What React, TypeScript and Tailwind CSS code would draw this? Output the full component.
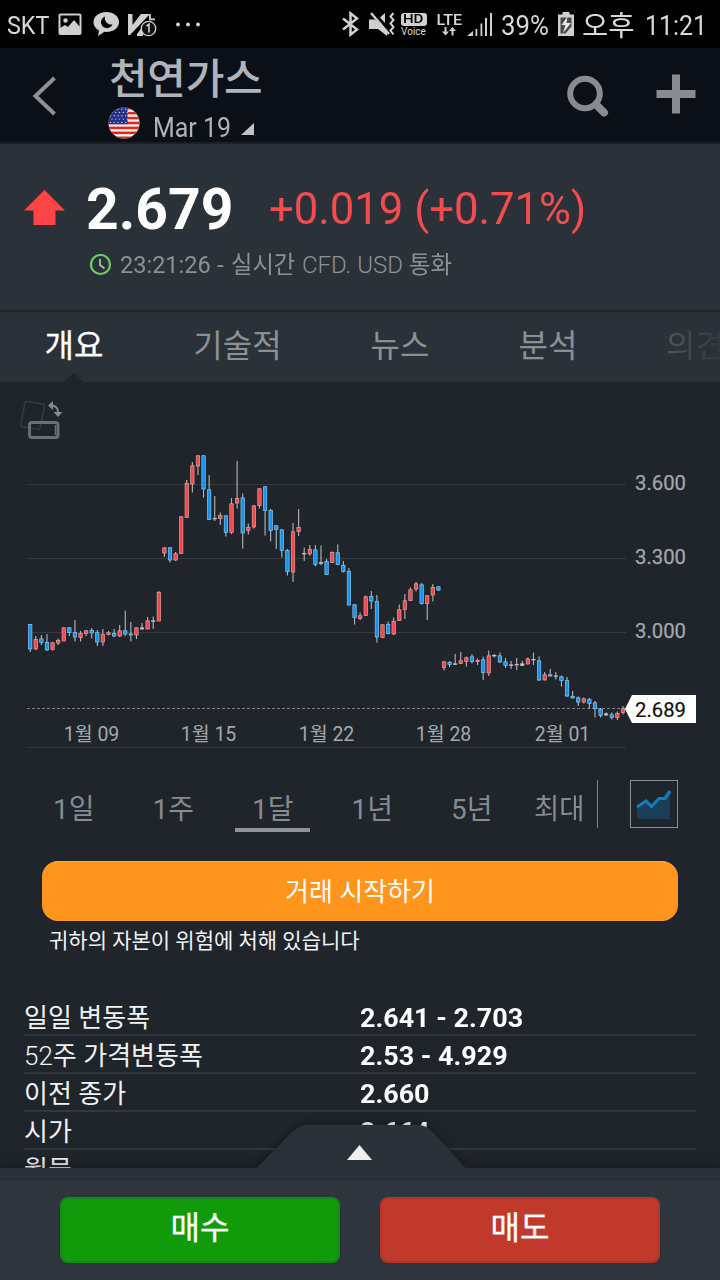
import React from "react";

type Kind = "r" | "b" | "w";
type Candle = [Kind, number, number, number, number];

// kind, high, body top, body bottom, low (vertical chart coordinates)
const candles: Candle[] = [
  ["b", 624, 624, 649, 652], ["r", 636, 639, 649, 650], ["b", 635, 638.5, 642.5, 645], ["b", 634, 642, 650, 651],
  ["r", 642, 642.5, 649.5, 650.5], ["r", 638.5, 640, 643, 645], ["r", 627, 627.5, 641, 641], ["b", 627, 627.5, 632.5, 636],
  ["b", 620, 632, 637, 641.5], ["r", 631, 633, 637.5, 641.5], ["r", 630, 630.5, 633.5, 636], ["b", 628, 630, 633, 638.5],
  ["b", 630, 632.5, 642, 646], ["r", 629, 634, 642, 646], ["r", 631, 632.5, 634.5, 635.5], ["b", 629, 633, 636, 637],
  ["r", 625, 630.5, 636, 637], ["b", 610.5, 630.5, 634, 636], ["b", 622, 633.5, 635, 641.5], ["r", 627, 627.5, 635, 639],
  ["w", 623, 627.5, 629, 630], ["r", 617, 620.5, 629, 629], ["w", 616.5, 620.5, 621.5, 629], ["r", 591, 592, 621, 621],
  ["r", 547, 547.5, 553, 557], ["b", 547, 547.5, 560, 562.5], ["r", 552, 553.5, 560, 561], ["r", 516, 516.5, 553.5, 553.5],
  ["r", 480, 483, 517.5, 518], ["r", 462, 465.5, 484, 492.5], ["r", 455, 455.5, 466, 475], ["b", 455, 455.5, 489, 497.5],
  ["b", 475, 489.5, 519.5, 520], ["w", 496, 518, 519, 521], ["r", 512.5, 515, 518.5, 525], ["b", 515, 515.5, 532.5, 536.5],
  ["r", 498, 503.5, 532.5, 534], ["r", 461, 498, 503, 508.5], ["b", 493.5, 497.5, 533, 548.5], ["r", 523.5, 527, 530.5, 534.5],
  ["r", 505, 505.5, 527, 528.5], ["r", 488, 488.5, 505.5, 508.5], ["b", 486, 486.5, 510.5, 535.5], ["b", 509, 510, 530.5, 541.5],
  ["b", 525, 525.5, 529.5, 549], ["b", 529, 529.5, 550.5, 557.5], ["b", 549, 550, 571.5, 575.5], ["r", 523, 531.5, 572, 582],
  ["r", 509, 527, 531.5, 536], ["w", 547.5, 553, 554, 561], ["r", 545, 549, 554, 555.5], ["b", 545, 549.5, 564.5, 566.5],
  ["w", 545.5, 562, 563.5, 565], ["b", 559, 561, 574.5, 575], ["r", 551.5, 552, 562.5, 563], ["b", 544.5, 552.5, 564.5, 565],
  ["b", 561, 565, 571.5, 572.5], ["b", 568, 571, 605, 605.5], ["b", 604, 604.5, 617.5, 624.5], ["r", 612.5, 615.5, 618.5, 620],
  ["r", 595.5, 596.5, 615.5, 616], ["b", 591, 596, 601, 609], ["b", 595, 601, 637, 642.5], ["r", 624, 624.5, 637.5, 638],
  ["b", 621.5, 624, 633.5, 634.5], ["r", 617.5, 621, 634, 635], ["r", 604.5, 609.5, 620.5, 621], ["r", 594, 600.5, 609.5, 619],
  ["r", 587.5, 589.5, 600.5, 601], ["r", 582, 583.5, 589, 591.5], ["b", 583, 584.5, 603.5, 604.5], ["r", 595, 595.5, 603.5, 620],
  ["r", 584, 587, 595, 601.5], ["b", 586, 586.5, 590, 591], ["r", 661, 661.5, 667.5, 670.5], ["b", 661, 662, 664.5, 667],
  ["w", 654, 663.5, 664.5, 665], ["r", 652, 660.5, 663.5, 664], ["r", 656.5, 657.5, 661.5, 666.5], ["b", 654, 656.5, 661.5, 663.5],
  ["r", 658.5, 660, 661.5, 665], ["b", 656.5, 659.5, 672.5, 680], ["r", 650.5, 655.5, 673, 676], ["w", 654, 655, 656, 657.5],
  ["b", 652.5, 655.5, 662, 663], ["b", 658, 661.5, 665.5, 668], ["w", 661, 664.5, 665.5, 669], ["w", 658, 664, 665, 670],
  ["w", 661, 663.5, 665.5, 666], ["r", 657.5, 658.5, 664, 664.5], ["w", 652.5, 659, 660, 665], ["b", 656.5, 660.5, 680, 681],
  ["r", 672, 674.5, 680, 680.5], ["b", 669, 674.5, 676, 676.5], ["w", 672, 675.5, 676.5, 679.5], ["b", 675.5, 676.5, 680.5, 686.5],
  ["b", 677, 680, 696, 697], ["b", 691, 696, 698, 698.5], ["b", 696.5, 697.5, 702, 706], ["r", 697.5, 698.5, 702, 703.5],
  ["b", 698, 699, 703.5, 709], ["b", 701, 702.5, 708.5, 717.5], ["b", 708, 709, 715.5, 717.5], ["w", 712.5, 713.5, 715, 716],
  ["b", 712.5, 714.5, 717.5, 719.5], ["r", 711.5, 713, 717.5, 720], ["r", 706, 708.5, 712.5, 714.5],
];

const fills: Record<Kind, string> = { r: "#f0474b", b: "#1493ee", w: "#c9cdd0" };
const strokes: Record<Kind, string> = { r: "#e8a0a1", b: "#8cc6ef", w: "#b9bdc0" };

function StatusBar() {
  return (
    <header className="flex h-12 shrink-0 items-center bg-black text-[28px] text-[#d8d8d8]">
      <span className="mt-[2px] ml-[7px] w-[51px] origin-left scale-x-[.88] text-[26.500px] whitespace-nowrap">SKT</span>
      <svg width="24" height="24" viewBox="0 0 24 24" fill="none">
        <rect x="1.500" y="2.500" width="21" height="19.500" rx="1" stroke="#d0d0d0" strokeWidth="2" />
        <circle cx="7.500" cy="8.500" r="2.200" fill="#d0d0d0" />
        <path d="M2 20v-4l5-3 3 2 6-7 6 7v6H2z" fill="#d0d0d0" />
      </svg>
      <svg className="ml-[11px]" width="27" height="26" viewBox="0 0 27 26">
        <path d="M13.5 1C6.300 1 .5 5.400.5 11c0 4 2.500 6.800 5.500 8.400L5 25l6.500-4.200c9 .8 14.500-4 14.500-9.800C26 5.400 20.500 1 13.500 1z" fill="#d0d0d0" />
        <path d="M12 5.500a6 6 0 1 0 7.500 8A6.500 6.500 0 0 1 12 5.500z" fill="#000" />
      </svg>
      <svg className="ml-[8px]" width="30" height="26" viewBox="0 0 30 26">
        <path d="M0 3h4.500v11L13 3h9L2 24H0z" fill="#d0d0d0" />
        <path d="M9 23l6-8v10H9zM21 3h1.800v4.500H27v1.800h-6z" fill="#d0d0d0" />
        <circle cx="20.500" cy="17.500" r="7.200" fill="#111" stroke="#d0d0d0" strokeWidth="1.300" />
        <path d="M18.500 15l2.500-1.700v8.200" fill="none" stroke="#d0d0d0" strokeWidth="1.600" />
      </svg>
      <svg className="ml-[17px]" width="28" height="6" viewBox="0 0 28 6" fill="#d8d8d8">
        <circle cx="3" cy="3.500" r="1.900" /><circle cx="13" cy="3.500" r="1.900" /><circle cx="23" cy="3.500" r="1.900" />
      </svg>
      <svg className="ml-[139px]" width="17" height="26" viewBox="0 0 17 26" fill="none" stroke="#d0d0d0" strokeWidth="2.500">
        <path d="M1 7.500l14 11-6.500 5.200V2.300L15 7.500l-14 11" />
      </svg>
      <svg className="ml-[10px]" width="27" height="26" viewBox="0 0 27 26" fill="none">
        <path d="M0 8.500h6l12 12v4.500l-9-7H0zM11 6.500L16 2v10z" fill="#d0d0d0" />
        <path d="M2 2l18 21" stroke="#d0d0d0" strokeWidth="2.400" />
        <path d="M24.500 2l-3 3.500 3 3.500-3 3.500 3 3.500-3 3.500 3 4" stroke="#d0d0d0" strokeWidth="2" />
      </svg>
      <div className="ml-[4px] flex w-[27px] flex-col items-center pt-px">
        <span className="flex h-[13px] w-[26px] items-center justify-center rounded-[3px] bg-[#d0d0d0] text-[12px] leading-none font-medium text-black"><span className="scale-x-[1.25]">HD</span></span>
        <span className="text-[10px] leading-[11px]">Voice</span>
      </div>
      <div className="ml-[8px] flex w-[28px] flex-col items-center">
        <span className="scale-x-[1.04] text-[15.500px] leading-[14px] font-medium">LTE</span>
        <svg width="14" height="9" viewBox="0 0 14 9" fill="#d0d0d0">
          <path d="M2.500 0h2v4.500H7L3.500 8.500 0 4.500h2.500zM9.500 8.500h2V4H14L10.500 0 7 4h2.500z" />
        </svg>
      </div>
      <svg className="ml-[4px]" width="26" height="26" viewBox="0 0 26 26" fill="#d0d0d0">
        <path d="M0 25l6-5v5zM8.500 18h1.800v7H8.500zM13.500 12.500h1.800V25h-1.800zM18 7h2v18h-2zM23 2h2v23h-2z" />
      </svg>
      <span className="mt-[4px] ml-[8px] w-[56px] origin-left scale-x-[.92] whitespace-nowrap">39%</span>
      <svg width="18" height="26" viewBox="0 0 18 26">
        <path d="M5.500 1h7v2.500H17V25H1V3.500h4.500z" fill="#d0d0d0" />
        <path d="M3.500 6.500h11v9l-6 7H3.500z" fill="#4a4a4a" />
        <path d="M10.500 5.500L4.500 14h4L6 22l8-10H9.500z" fill="#e8e8e8" />
      </svg>
      <span className="mt-[5px] ml-[7px] w-[63px] origin-left scale-x-[1.02] whitespace-nowrap">오후</span>
      <span className="mt-[4px] origin-left scale-x-[.89] whitespace-nowrap">11:21</span>
    </header>
  );
}

function Flag() {
  const stripes = [0, 1, 2, 3, 4, 5, 6];
  const stars = [0, 1, 2, 3, 4];
  return (
    <svg width="32" height="32" viewBox="0 0 32 32">
      <defs>
        <clipPath id="disc"><circle cx="16" cy="16" r="15.500" /></clipPath>
      </defs>
      <g clipPath="url(#disc)">
        <rect width="32" height="32" fill="#f3e9e6" />
        {stripes.map((i) => <rect key={i} y={i * 4.92} width="32" height="2.460" fill="#d92a20" />)}
        <rect width="19.500" height="17.200" fill="#25318b" />
        {stars.map((r) => stars.map((c) => <circle key={r + "-" + c} cx={2.5 + c * 3.8 + (r % 2) * 1.5} cy={2.2 + r * 3.3} r=".7" fill="#c5cbe8" />))}
      </g>
    </svg>
  );
}

function TitleBar() {
  return (
    <div className="flex h-24 shrink-0 border-b-2 border-[#1b2028] bg-[#0b0f17] text-[#b0b4ba]">
      <svg className="mt-[27px] ml-[31px]" width="28" height="42" viewBox="0 0 28 42" fill="none">
        <path d="M23.500 3L4.500 21l19 18" stroke="#8d9198" strokeWidth="4" />
      </svg>
      <div className="ml-[48px] flex w-[459px] flex-col">
        <h1 className="mt-[10px] ml-[2px] h-[46px] text-[42px] leading-[44px] font-medium tracking-[-0.300px]">천연가스</h1>
        <div className="flex h-[36px] items-center">
          <div className="mt-[2px] ml-px"><Flag /></div>
          <span className="mt-[12px] ml-[13px] w-[87px] origin-left scale-x-[.89] text-[28px] whitespace-nowrap">Mar 19</span>
          <svg className="mt-[14px] ml-px" width="14" height="14" viewBox="0 0 14 14"><path d="M13 1v12H0z" fill="#c0c3c6" /></svg>
        </div>
      </div>
      <svg className="mt-[27px]" width="48" height="46" viewBox="0 0 48 46" fill="none" stroke="#888c92">
        <circle cx="19" cy="18.500" r="14.800" strokeWidth="6" />
        <path d="M30 29.500l8 8" strokeWidth="8" strokeLinecap="round" />
      </svg>
      <svg className="mt-[26px] ml-[42px]" width="40" height="40" viewBox="0 0 40 40" fill="none" stroke="#888c92" strokeWidth="8">
        <path d="M20 .5v39M.5 20h39" />
      </svg>
    </div>
  );
}

function Quote() {
  return (
    <section className="flex h-[166px] shrink-0 flex-col bg-[#2b3138]">
      <div className="mt-[33px] flex h-[64px] items-center">
        <svg className="ml-[24px]" width="42" height="38" viewBox="0 0 42 38"><path d="M20.500 0L41 20.500H31.500V35h-22V20.500H0z" fill="#fb4547" /></svg>
        <span className="mt-px ml-[20px] w-[183px] text-[57px] leading-none font-bold whitespace-nowrap text-white">2.679</span>
        <span className="origin-left scale-x-[.992] text-[44px] leading-none whitespace-nowrap text-[#f34c4f]">+0.019 (+0.71%)</span>
      </div>
      <div className="mt-[6px] flex h-[36px] items-center text-[24px] whitespace-nowrap text-[#8c9196]">
        <svg className="ml-[89px]" width="23" height="23" viewBox="0 0 23 23" fill="none">
          <circle cx="11.500" cy="10.500" r="9.500" stroke="#6ecb63" strokeWidth="2.200" />
          <path d="M11 5V11l4.500 3.500" stroke="#a4c9a0" strokeWidth="1.800" />
        </svg>
        <span className="ml-[8px] w-[97px] origin-left scale-x-[.98]">23:21:26</span>
        <span className="w-[14px]">-</span>
        <span className="w-[71px] origin-left scale-x-[.97]">실시간</span>
        <span className="w-[107px] font-light">CFD. USD</span>
        <span className="origin-left scale-x-[.97]">통화</span>
      </div>
    </section>
  );
}

function Tabs() {
  return (
    <nav className="relative flex h-[72px] shrink-0 overflow-hidden border-t-2 border-[#21262c] bg-[#2b3138] text-[32px] leading-[69px] whitespace-nowrap text-[#8b9095]">
      <span className="w-[148px] shrink-0 text-center text-white [-webkit-text-stroke:0.300px_white]">개요</span>
      <span className="w-[179px] shrink-0 text-center">기술적</span>
      <span className="w-[146px] shrink-0 text-center">뉴스</span>
      <span className="w-[150px] shrink-0 text-center">분석</span>
      <span className="ml-[43px] shrink-0 bg-linear-to-r from-[#50565c] to-[#30363d] bg-clip-text text-transparent">의견</span>
      <svg className="absolute bottom-0 left-[64px]" width="22" height="9" viewBox="0 0 22 9"><path d="M0 9L10 0l10 9z" fill="#1f252b" /></svg>
    </nav>
  );
}

function RotateHint() {
  return (
    <svg className="ml-[18px]" width="46" height="44" viewBox="0 0 46 44" fill="none">
      <path d="M9 3.500l16 2.500c1.500.3 2 1 1.500 2.500L22 30c-.3 1-1 1.500-2 1.300L4 28.500c-1-.2-1.500-1-1.200-2L7 5c.2-1 1-1.700 2-1.500z" stroke="#363c42" strokeWidth="1.500" />
      <rect x="11.500" y="24.500" width="28.500" height="15" rx="2.500" stroke="#6b7177" strokeWidth="2.800" />
      <path d="M37.500 27v10" stroke="#6b7177" strokeWidth="1.500" />
      <path d="M33 7.500c4-.5 7.500 3 7 7" stroke="#858a8f" strokeWidth="2" />
      <path d="M30 7.500l5-4.500v9zM35.500 14h9L40 19z" fill="#858a8f" />
    </svg>
  );
}

function Chart() {
  const dates: [number, string][] = [[91.5, "1월 09"], [208.5, "1월 15"], [326.5, "1월 22"], [443.5, "1월 28"], [562.5, "2월 01"]];
  const prices: [number, string][] = [[484, "3.600"], [558, "3.300"], [632, "3.000"]];
  return (
    <svg width="720" height="310" viewBox="0 445 720 310" fontSize="20" fill="#a4a8ac">
      {prices.map(([y, label]) => (
        <g key={label}>
          <path d={`M27 ${y + 0.5}H626`} stroke="#353b41" />
          <text x="635" y={y + 6} fontSize="20.300" stroke="#a4a8ac" strokeWidth=".25">{label}</text>
        </g>
      ))}
      <path d="M27 747.500H626" stroke="#353b41" />
      <path d="M27 708.500H626" stroke="#7b7f83" strokeDasharray="3 2" />
      {candles.map(([k, high, top, bottom, low], i) => {
        const x = 30.2 + i * 5.592;
        return (
          <g key={i}>
            <path d={`M${x} ${high}V${low}`} stroke="#b4b7ba" strokeWidth="1.100" />
            <rect x={x - 1.7} y={top + 0.3} width="3.400" height={Math.max(0.5, bottom - top - 0.3)} fill={fills[k]} stroke={strokes[k]} strokeWidth=".7" />
          </g>
        );
      })}
      {dates.map(([x, label]) => <text key={label} x={x} y="740.500" fontSize="19.500" textAnchor="middle">{label}</text>)}
      <path d="M625 709l7-14h64v28h-64z" fill="#fff" />
      <text x="635" y="717" fontSize="20.300" fill="#111" stroke="#111" strokeWidth=".2">2.689</text>
    </svg>
  );
}

function Ranges() {
  const ranges = ["1일", "1주", "1달", "1년", "5년"];
  return (
    <div className="flex h-[106px] shrink-0 pt-[25px] text-[28px] leading-[60px] whitespace-nowrap text-[#868b90]">
      <div className="ml-[24px] flex">
        {ranges.map((r) => (
          <div key={r} className="flex w-[99.500px] flex-col items-center">
            <span className="h-[48px]">{r}</span>
            {r === "1달" && <i className="h-1 w-[75px] bg-[#90949a]" />}
          </div>
        ))}
      </div>
      <span className="ml-[12px] h-[48px] w-[63px] origin-left scale-x-[.98]">최대</span>
      <i className="h-[48px] w-px bg-[#80858a]" />
      <div className="ml-[32px] h-[48px] w-[48px] border border-[#8b9095]">
        <svg width="46" height="46" viewBox="0 0 46 46" fill="none">
          <path d="M6 27l9-6 6 6 8-8h6l4-7v26H6z" fill="#1a3e58" />
          <path d="M6 26l9-6 5.500 5.500L28 17.500h6L39 10" stroke="#0f7cc4" strokeWidth="3.200" />
        </svg>
      </div>
    </div>
  );
}

const rows: [React.ReactNode, string][] = [
  ["일일 변동폭", "2.641 - 2.703"],
  [<><span className="font-light">52</span>주 가격변동폭</>, "2.53 - 4.929"],
  ["이전 종가", "2.660"],
  ["시가", "2.664"],
  ["월물", ""],
];

function Stats() {
  return (
    <dl className="mx-6 mt-[41px] flex flex-col text-[26px] whitespace-nowrap text-[#f2f3f4]">
      {rows.map(([label, value], i) => (
        <div key={i} className="flex h-[38px] border-b-2 border-[#32383f] leading-[41px]">
          <dt className="w-[336px]">{label}</dt>
          <dd className="origin-left scale-x-[1.035] font-bold text-white">{value}</dd>
        </div>
      ))}
    </dl>
  );
}

function TradeBar() {
  return (
    <footer className="relative flex h-[112px] shrink-0 flex-col bg-[#2f353d] shadow-[0_-2px_14px_rgba(0,0,0,0.3)]">
      <svg className="absolute bottom-full left-[246px]" width="230" height="54" viewBox="0 0 230 54">
        <path d="M10 54.500L46 18q8-7 15-7h111q8 0 15 7l33 36.500z" fill="#2b3138" style={{ filter: "drop-shadow(0 -1px 4px rgba(0,0,0,.35))" }} />
        <path d="M113.500 31l12.500 15h-25z" fill="#f0f0f0" />
      </svg>
      <div className="h-[12px] border-b border-[#262c33] bg-[#2b3138]" />
      <div className="mt-[17px] flex gap-10 px-[60px] text-[32px] leading-[58px] text-white">
        <button className="flex h-[66px] flex-1 justify-center rounded-lg border-2 border-[#15881a] bg-[#119a0a] [-webkit-text-stroke:0.300px_white]">매수</button>
        <button className="flex h-[66px] flex-1 justify-center rounded-lg border-2 border-[#b0362c] bg-[#c0392b] [-webkit-text-stroke:0.300px_white]">매도</button>
      </div>
    </footer>
  );
}

export default function App() {
  return (
    <div className="flex h-[1280px] w-[720px] flex-col overflow-hidden bg-[#1f252b] font-['Roboto','Noto_Sans_CJK_KR',sans-serif]">
      <StatusBar />
      <TitleBar />
      <Quote />
      <Tabs />
      <main className="flex h-[786px] shrink-0 flex-col overflow-hidden">
        <div className="h-[63px] shrink-0 pt-[16px]"><RotateHint /></div>
        <div className="h-[310px] shrink-0"><Chart /></div>
        <Ranges />
        <button className="mx-[42px] h-[60px] shrink-0 rounded-[16px] border-t border-[#ffa947] bg-[#ff951c] pt-[2px] text-[26px] text-white">거래 시작하기</button>
        <p className="mt-[4px] ml-[49px] h-[32px] shrink-0 text-[21px] leading-[32px] whitespace-nowrap text-[#f2f3f4]">귀하의 자본이 위험에 처해 있습니다</p>
        <Stats />
      </main>
      <TradeBar />
    </div>
  );
}
